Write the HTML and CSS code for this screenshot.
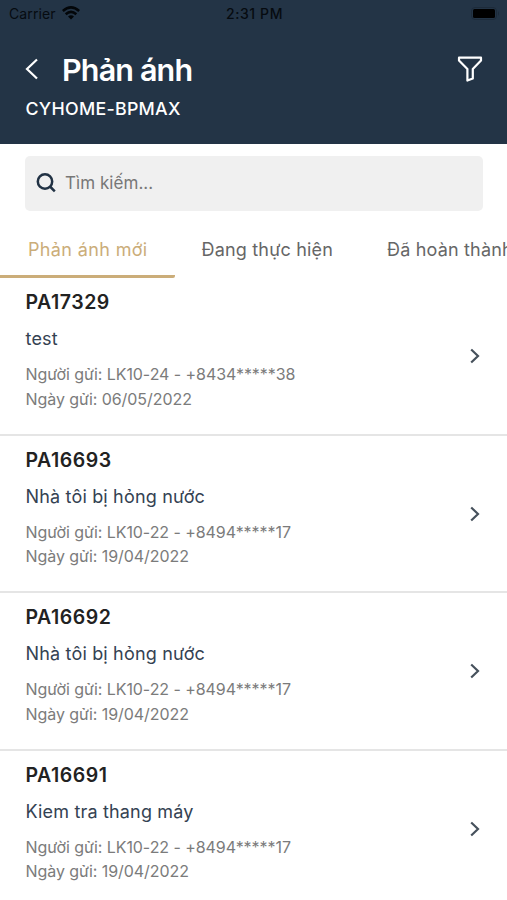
FILE: index.html
```html
<!DOCTYPE html>
<html lang="vi">
<head>
<meta charset="utf-8">
<title>Phản ánh</title>
<link rel="stylesheet" href="styles.css">
</head>
<body>
<header class="header">
  <div class="status">
    <div class="carrier"><span>Carrier</span>
      <svg width="18" height="14" viewBox="0 0 18 14" fill="none" stroke="#030609" stroke-width="2.600"><path d="M.8 5Q9-2.200 17.200 5M3.700 8.200Q9 3.600 14.300 8.200"/><path d="M6 10.600Q9 7.800 12 10.600L9 13.600z" fill="#030609" stroke="none"/></svg>
    </div>
    <span class="time">2:31 PM</span>
    <svg class="battery" width="29" height="13" viewBox="0 0 29 13"><rect x=".5" y=".5" width="25" height="12" rx="3.500" fill="none" stroke="#1d2b3a"/><rect x="2" y="2" width="22" height="9" rx="1.500"/><path d="M27 4q2 2.500 0 5z" fill="#1d2b3a"/></svg>
  </div>
  <div class="heading">
    <svg class="back" width="14" height="22" viewBox="0 0 14 22" fill="none" stroke="#fff" stroke-width="2.200"><path d="M12 1.500L2 11l10 9.500"/></svg>
    <h1>Phản ánh</h1>
    <svg class="filter" width="26" height="26" viewBox="0 0 26 26" fill="none" stroke="#fff" stroke-width="2.200" stroke-linejoin="round"><path d="M2 1.700h22v2.800L15.800 13v9.500L10.400 24.500V13L2 4.500z"/></svg>
  </div>
  <p class="project">CYHOME-BPMAX</p>
</header>
<main>
  <div class="search">
    <svg width="20" height="20" viewBox="0 0 20 20" fill="none" stroke="#213244" stroke-width="2.500"><circle cx="9" cy="8.500" r="7.200"/><path d="M14 13.500l4.800 4.800"/></svg>
    <span>Tìm kiếm...</span>
  </div>
  <nav class="tabs"><span class="tab active">Phản ánh mới</span><span class="tab">Đang thực hiện</span><span class="tab">Đã hoàn thành</span></nav>
  <section class="list">
    <article class="item"><div><h2>PA17329</h2><p class="title">test</p><p class="meta sender">Người gửi: LK10-24 - +8434*****38</p><p class="meta">Ngày gửi: 06/05/2022</p></div><svg class="chev" width="10" height="16" viewBox="0 0 10 16"><path d="M1.200 1.500L8 8l-6.800 6.500"/></svg></article>
    <article class="item"><div><h2>PA16693</h2><p class="title">Nhà tôi bị hỏng nước</p><p class="meta sender">Người gửi: LK10-22 - +8494*****17</p><p class="meta">Ngày gửi: 19/04/2022</p></div><svg class="chev" width="10" height="16" viewBox="0 0 10 16"><path d="M1.200 1.500L8 8l-6.800 6.500"/></svg></article>
    <article class="item"><div><h2>PA16692</h2><p class="title">Nhà tôi bị hỏng nước</p><p class="meta sender">Người gửi: LK10-22 - +8494*****17</p><p class="meta">Ngày gửi: 19/04/2022</p></div><svg class="chev" width="10" height="16" viewBox="0 0 10 16"><path d="M1.200 1.500L8 8l-6.800 6.500"/></svg></article>
    <article class="item"><div><h2>PA16691</h2><p class="title">Kiem tra thang máy</p><p class="meta sender">Người gửi: LK10-22 - +8494*****17</p><p class="meta">Ngày gửi: 19/04/2022</p></div><svg class="chev" width="10" height="16" viewBox="0 0 10 16"><path d="M1.200 1.500L8 8l-6.800 6.500"/></svg></article>
  </section>
</main>
</body>
</html>
```
FILE: styles.css
```css
* { box-sizing: border-box; margin: 0; padding: 0; }
body { width: 507px; height: 900px; overflow: hidden; background: #fff; font-family: Inter, sans-serif; color: #213244; white-space: nowrap; }
svg { display: block; flex: none; }
.header { height: 143.500px; background: #233446; color: #fff; }
.status { height: 27px; display: grid; grid-template-columns: 1fr auto 1fr; align-items: center; padding: 0 7px 0 9px; color: #060b10; font-size: 14px; }
.carrier { display: flex; align-items: center; gap: 6px; letter-spacing: .1px; }
.carrier svg { margin-top: -1px; }
.time { font-weight: 500; letter-spacing: .6px; }
.battery { justify-self: end; }
.heading { display: flex; align-items: center; height: 40px; margin-top: 22px; padding: 0 24px 0 25px; }
.heading h1 { margin-left: 23px; padding-top: 1px; font-size: 30.500px; line-height: 40px; font-weight: 600; letter-spacing: -.85px; }
.filter { margin-left: auto; }
.project { margin: 9px 0 0 25.500px; font-size: 17.800px; line-height: 22px; font-weight: 500; letter-spacing: .28px; }
.search { display: flex; align-items: center; gap: 9px; height: 55px; margin: 12.500px 24px 0 25px; padding-left: 11px; border-radius: 5px; background: #f0f0f0; color: #777; font-size: 17px; letter-spacing: .05px; }
.search svg { margin-top: -1px; }
.search span { margin-top: -1px; }
.tabs { display: flex; height: 67px; overflow: hidden; }
.tab { flex: none; padding: 26px 27px 0; line-height: 26px; font-size: 18px; letter-spacing: .18px; color: #666; }
.tab.active { width: 174.500px; padding-left: 28px; border-bottom: 3px solid #cbad79; border-radius: 0 0 2px 0; color: #cbad79; letter-spacing: .36px; }
.item { display: flex; justify-content: space-between; align-items: center; height: 157.600px; padding: 1px 27px 0 25px; border-bottom: 2px solid #e5e5e5; }
.item > div { align-self: flex-start; padding: 11px 0 0 .5px; }
.item h2 { font-size: 19.500px; line-height: 24px; font-weight: 600; letter-spacing: .55px; color: #222; }
.title { margin-top: 12.200px; font-size: 18px; line-height: 26px; letter-spacing: .17px; color: #344252; }
.meta { font-size: 16px; line-height: 24.500px; letter-spacing: -.06px; color: #7b7b7b; }
.sender { margin-top: 9.900px; }
.chev { fill: none; stroke: #46515c; stroke-width: 2.200; }
```
